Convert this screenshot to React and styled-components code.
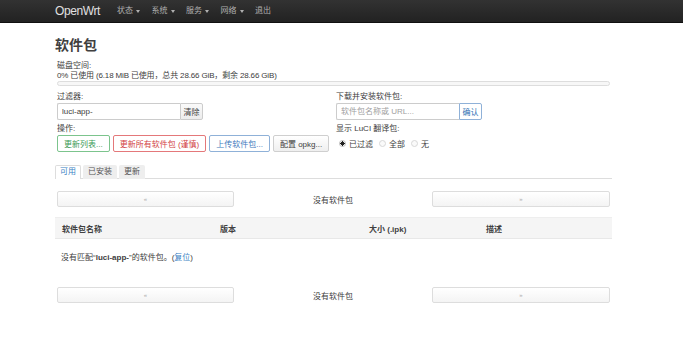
import React from "react";
import styled, { createGlobalStyle } from "styled-components";

const Global = createGlobalStyle`
  html, body { margin: 0; padding: 0; background: #fff; }
  body {
    font-family: "Liberation Sans", "Noto Sans CJK SC", sans-serif;
    font-size: 8px;
    color: #404040;
  }
  * { box-sizing: border-box; }
`;

const Navbar = styled.header`
  height: 23px;
  background: linear-gradient(#323232, #222);
  border-bottom: 1px solid #111;
  display: flex;
  align-items: center;
  padding-left: 55px;
`;

const Brand = styled.span`
  width: 62px;
  font-size: 12px;
  letter-spacing: -0.4px;
  color: #e0e0e0;
  line-height: 22px;
`;

const NavItem = styled.span`
  display: flex;
  align-items: center;
  margin-right: 11.5px;
  color: #b0b0b0;
  font-size: 8px;
  line-height: 22px;
`;

const Caret = styled.span`
  margin-left: 3px;
  width: 0;
  height: 0;
  border-left: 2.5px solid transparent;
  border-right: 2.5px solid transparent;
  border-top: 3px solid #b0b0b0;
`;

const Main = styled.main`
  width: 557px;
  margin-left: 55px;
`;

const Title = styled.h2`
  margin: 14px 0 8px;
  font-size: 14px;
  line-height: 16px;
  font-weight: 700;
  color: #404040;
`;

const Line = styled.div`
  line-height: 10px;
  padding-left: 2px;
  color: #404040;
  letter-spacing: ${(p) => (p.$tight ? "-0.15px" : "0")};
`;

const Progress = styled.div`
  margin-left: 2px;
  width: 553px;
  height: 5px;
  border: 1px solid #ddd;
  border-radius: 3px;
  background: #f7f7f7;
`;

const FormGrid = styled.div`
  margin: 6px 0 0 2px;
  display: grid;
  grid-template-columns: 279px 1fr;
  row-gap: 4px;
`;

const Field = styled.div`
  display: flex;
  flex-direction: column;
  gap: 1px;
`;

const Label = styled.div`
  line-height: 10px;
  color: #404040;
`;

const Group = styled.div`
  display: flex;
  height: 17px;
`;

const TextInput = styled.input`
  width: 123px;
  height: 17px;
  border: 1px solid #ccc;
  border-right: none;
  border-radius: 2px 0 0 2px;
  padding: 0 4px;
  font: inherit;
  font-size: 8px;
  color: #404040;
  outline: none;
  &::placeholder { color: #a0a0a0; }
`;

const AddonButton = styled.button`
  width: 23px;
  height: 17px;
  padding: 0;
  border: 1px solid ${(p) => (p.$tone === "blue" ? "#8fb1d8" : "#ccc")};
  border-radius: 0 2px 2px 0;
  background: ${(p) => (p.$tone === "blue" ? "#fff" : "linear-gradient(#fafafa, #ececec)")};
  color: ${(p) => (p.$tone === "blue" ? "#2f6fb3" : "#404040")};
  font: inherit;
  font-size: 8px;
`;

const tones = {
  green: { border: "#7cc48d", color: "#3a9a55" },
  red: { border: "#e4787a", color: "#d23f45" },
  blue: { border: "#8fb1d8", color: "#3e78bd" },
  gray: { border: "#cfcfcf", color: "#404040" },
};

const Actions = styled.div`
  display: flex;
  gap: 3px;
  height: 17px;
`;

const ActionButton = styled.button`
  height: 17px;
  padding: 0 6px;
  border-radius: 2px;
  border: 1px solid ${(p) => tones[p.$tone].border};
  color: ${(p) => tones[p.$tone].color};
  background: ${(p) => (p.$tone === "gray" ? "linear-gradient(#fff, #efefef)" : "#fff")};
  font: inherit;
  font-size: 8px;
  white-space: nowrap;
`;

const Radios = styled.div`
  display: flex;
  align-items: center;
  height: 17px;
  padding-left: 3px;
`;

const RadioItem = styled.label`
  display: flex;
  align-items: center;
  gap: 3px;
  margin-right: 6px;
  color: #404040;
`;

const RadioDot = styled.span`
  width: 7px;
  height: 7px;
  border-radius: 50%;
  border: 1px solid ${(p) => (p.$on ? "#bbb" : "#d8d8d8")};
  background: ${(p) => (p.$on ? "radial-gradient(circle, #222 0 2px, #fff 2.2px)" : "#fafafa")};
`;

const Tabs = styled.div`
  margin-top: 13px;
  display: flex;
  gap: 2px;
  border-bottom: 1px solid #ddd;
  height: 14px;
`;

const Tab = styled.div`
  height: 14px;
  line-height: 12px;
  padding: 0 4px;
  border: 1px solid ${(p) => (p.$active ? "#ddd" : "transparent")};
  border-bottom: none;
  border-radius: 2px 2px 0 0;
  background: ${(p) => (p.$active ? "#fff" : "#eee")};
  color: ${(p) => (p.$active ? "#3a7fc4" : "#555")};
`;

const Pager = styled.div`
  margin-top: ${(p) => p.$top}px;
  display: grid;
  grid-template-columns: 177px 1fr 178px;
  padding: 0 2px;
  height: 16px;
  align-items: center;
`;

const PagerButton = styled.button`
  height: 16px;
  padding: 0;
  border: 1px solid #ddd;
  border-radius: 2px;
  background: linear-gradient(#fff, #f4f4f4);
  color: #aaa;
  font: inherit;
  font-size: 6px;
`;

const PagerText = styled.div`
  text-align: center;
  color: #404040;
`;

const TableHead = styled.div`
  margin-top: 10px;
  display: grid;
  grid-template-columns: 158px 149px 117px 1fr;
  height: 22px;
  align-items: center;
  background: #f5f5f5;
  border-top: 1px solid #eee;
  border-bottom: 1px solid #e8e8e8;
`;

const HeadCell = styled.div`
  padding-left: 7px;
  font-weight: 700;
  color: #404040;
`;

const Empty = styled.div`
  margin-top: 14px;
  padding-left: 6px;
  line-height: 10px;
  color: #404040;
  b { font-weight: 700; }
`;

const Link = styled.a`
  color: #3a7fc4;
  text-decoration: none;
`;

export default function App() {
  return (
    <>
      <Global />
      <Navbar>
        <Brand>OpenWrt</Brand>
        <NavItem>状态<Caret /></NavItem>
        <NavItem>系统<Caret /></NavItem>
        <NavItem>服务<Caret /></NavItem>
        <NavItem>网络<Caret /></NavItem>
        <NavItem>退出</NavItem>
      </Navbar>
      <Main>
        <Title>软件包</Title>
        <Line>磁盘空间:</Line>
        <Line $tight>0% 已使用 (6.18 MiB 已使用，总共 28.66 GiB，剩余 28.66 GiB)</Line>
        <Progress />
        <FormGrid>
          <Field>
            <Label>过滤器:</Label>
            <Group>
              <TextInput defaultValue="luci-app-" />
              <AddonButton>清除</AddonButton>
            </Group>
          </Field>
          <Field>
            <Label>下载并安装软件包:</Label>
            <Group>
              <TextInput placeholder="软件包名称或 URL..." />
              <AddonButton $tone="blue">确认</AddonButton>
            </Group>
          </Field>
          <Field>
            <Label>操作:</Label>
            <Actions>
              <ActionButton $tone="green">更新列表...</ActionButton>
              <ActionButton $tone="red">更新所有软件包 (谨慎)</ActionButton>
              <ActionButton $tone="blue">上传软件包...</ActionButton>
              <ActionButton $tone="gray">配置 opkg...</ActionButton>
            </Actions>
          </Field>
          <Field>
            <Label>显示 LuCI 翻译包:</Label>
            <Radios>
              <RadioItem><RadioDot $on />已过滤</RadioItem>
              <RadioItem><RadioDot />全部</RadioItem>
              <RadioItem><RadioDot />无</RadioItem>
            </Radios>
          </Field>
        </FormGrid>
        <Tabs>
          <Tab $active>可用</Tab>
          <Tab>已安装</Tab>
          <Tab>更新</Tab>
        </Tabs>
        <Pager $top={12}>
          <PagerButton>«</PagerButton>
          <PagerText>没有软件包</PagerText>
          <PagerButton>»</PagerButton>
        </Pager>
        <TableHead>
          <HeadCell>软件包名称</HeadCell>
          <HeadCell>版本</HeadCell>
          <HeadCell>大小 (.ipk)</HeadCell>
          <HeadCell>描述</HeadCell>
        </TableHead>
        <Empty>
          没有匹配“<b>luci-app-</b>”的软件包。(<Link href="#">复位</Link>)
        </Empty>
        <Pager $top={24}>
          <PagerButton>«</PagerButton>
          <PagerText>没有软件包</PagerText>
          <PagerButton>»</PagerButton>
        </Pager>
      </Main>
    </>
  );
}
